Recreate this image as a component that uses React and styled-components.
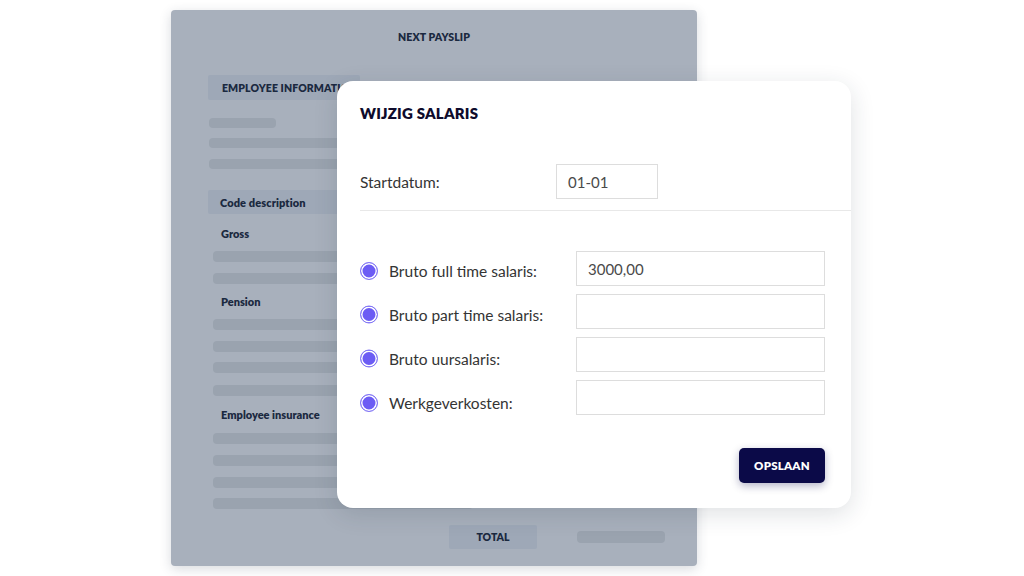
import React from "react";
import styled, { createGlobalStyle } from "styled-components";

const Global = createGlobalStyle`
  html, body { margin: 0; padding: 0; background: #ffffff; }
  body { width: 1024px; height: 576px; overflow: hidden; font-family: Lato, "Noto Sans", sans-serif; }
  * { box-sizing: border-box; }
`;

const Stage = styled.div`
  position: relative;
  width: 1024px;
  height: 576px;
  padding: 10px 0 0 171px;
`;

const Payslip = styled.div`
  width: 526px;
  height: 556px;
  background: #a8b0bc;
  border-radius: 4px;
  box-shadow: 0 3px 12px rgba(40, 50, 70, 0.18);
  padding: 20px 0 0 37px;
  display: flex;
  flex-direction: column;
  color: #1b2940;
`;

const SlipTitle = styled.div`
  font-size: 10.5px;
  font-weight: 800;
  line-height: 14px;
  text-align: center;
  margin-left: -37px;
  letter-spacing: 0.1px;
`;

const Header = styled.div`
  width: ${(p) => p.$w}px;
  height: ${(p) => p.$h || 25}px;
  margin-top: ${(p) => p.$mt}px;
  background: #9ea8b7;
  border-radius: 2px;
  display: flex;
  align-items: center;
  padding-left: ${(p) => p.$pl || 14}px;
  font-size: ${(p) => p.$fs || 10.5}px;
  font-weight: 800;
  letter-spacing: 0.1px;
  white-space: nowrap;
`;

const Bar = styled.div`
  width: ${(p) => p.$w}px;
  height: ${(p) => p.$h || 11}px;
  margin-top: ${(p) => p.$mt}px;
  margin-left: ${(p) => p.$ml || 0}px;
  background: #9aa3af;
  border-radius: 4px;
`;

const SectionLabel = styled.div`
  font-size: 11px;
  font-weight: 800;
  line-height: 14px;
  margin-top: ${(p) => p.$mt}px;
  padding-left: 13px;
`;

const TotalRow = styled.div`
  display: flex;
  align-items: center;
  margin-top: auto;
  margin-bottom: 17px;
  padding-left: 241px;
  gap: 40px;
`;

const TotalBox = styled.div`
  width: 88px;
  height: 24px;
  background: #9ea8b7;
  border-radius: 2px;
  display: flex;
  align-items: center;
  justify-content: center;
  font-size: 10.5px;
  font-weight: 800;
`;

const Modal = styled.div`
  position: absolute;
  left: 337px;
  top: 81px;
  width: 514px;
  height: 427px;
  background: #ffffff;
  border-radius: 16px;
  box-shadow: 0 6px 24px rgba(30, 40, 60, 0.14);
  padding: 23px 26px 25px 23px;
  display: flex;
  flex-direction: column;
`;

const ModalTitle = styled.h2`
  margin: 0;
  font-size: 15px;
  line-height: 18px;
  font-weight: 800;
  color: #0e0b2c;
  letter-spacing: 0.2px;
`;

const DateRow = styled.div`
  display: flex;
  align-items: center;
  margin-top: 42px;
`;

const Label = styled.span`
  font-size: 15.5px;
  color: #343434;
  width: ${(p) => p.$w}px;
  flex-shrink: 0;
`;

const Input = styled.div`
  width: ${(p) => p.$w}px;
  height: ${(p) => p.$h || 35}px;
  border: 1.5px solid #dddddd;
  display: flex;
  align-items: center;
  padding-left: 11px;
  font-size: 15px;
  color: #4a4a4a;
  font-family: Lato, "Noto Sans", sans-serif;
`;

const Divider = styled.hr`
  border: 0;
  border-top: 1.5px solid #e8e8e8;
  margin: 11px -26px 0 0;
`;

const Fields = styled.div`
  display: flex;
  flex-direction: column;
  gap: 8px;
  margin-top: 40px;
`;

const FieldRow = styled.div`
  display: flex;
  align-items: center;
`;

const RadioLabel = styled.div`
  display: flex;
  align-items: center;
  gap: 11px;
  width: 216px;
  flex-shrink: 0;
  transform: translateY(${(p) => p.$dy}px);
`;

const Radio = styled.span`
  width: 18px;
  height: 18px;
  border-radius: 50%;
  border: 1.5px solid #8377f5;
  background: #6c5cf4;
  box-shadow: inset 0 0 0 1.5px #ffffff;
  flex-shrink: 0;
`;

const Footer = styled.div`
  display: flex;
  justify-content: flex-end;
  margin-top: auto;
`;

const Button = styled.button`
  width: 86px;
  height: 35px;
  border: 0;
  border-radius: 5px;
  background: #0b0a48;
  color: #ffffff;
  font-family: Lato, "Noto Sans", sans-serif;
  font-weight: 800;
  font-size: 11.5px;
  letter-spacing: 0.2px;
  box-shadow: 0 3px 8px rgba(11, 10, 72, 0.3);
`;

const fields = [
  { label: "Bruto full time salaris:", value: "3000,00", dy: 2 },
  { label: "Bruto part time salaris:", value: "", dy: 2.5 },
  { label: "Bruto uursalaris:", value: "", dy: 3.5 },
  { label: "Werkgeverkosten:", value: "", dy: 5 },
];

export default function App() {
  return (
    <>
      <Global />
      <Stage>
        <Payslip>
          <SlipTitle>NEXT PAYSLIP</SlipTitle>
          <Header $w={152} $mt={31}>EMPLOYEE INFORMATION</Header>
          <Bar $w={67} $h={10} $mt={18} $ml={1} />
          <Bar $w={220} $h={10} $mt={10} $ml={1} />
          <Bar $w={220} $h={10} $mt={11} $ml={1} />
          <Header $w={300} $h={24} $mt={21} $pl={12} $fs={11}>
            Code description
          </Header>
          <SectionLabel $mt={13}>Gross</SectionLabel>
          <Bar $w={260} $mt={10} $ml={5} />
          <Bar $w={260} $mt={11} $ml={5} />
          <SectionLabel $mt={11}>Pension</SectionLabel>
          <Bar $w={260} $mt={10} $ml={5} />
          <Bar $w={260} $mt={11} $ml={5} />
          <Bar $w={260} $mt={10} $ml={5} />
          <Bar $w={260} $mt={12} $ml={5} />
          <SectionLabel $mt={12}>Employee insurance</SectionLabel>
          <Bar $w={260} $mt={11} $ml={5} />
          <Bar $w={260} $mt={11} $ml={5} />
          <Bar $w={260} $mt={11} $ml={5} />
          <Bar $w={260} $mt={10} $ml={5} />
          <TotalRow>
            <TotalBox>TOTAL</TotalBox>
            <Bar $w={88} $h={12} $mt={0} />
          </TotalRow>
        </Payslip>

        <Modal>
          <ModalTitle>WIJZIG SALARIS</ModalTitle>
          <DateRow>
            <Label $w={196}>Startdatum:</Label>
            <Input $w={102} $h={35}>01-01</Input>
          </DateRow>
          <Divider />
          <Fields>
            {fields.map((f) => (
              <FieldRow key={f.label}>
                <RadioLabel $dy={f.dy}>
                  <Radio />
                  <Label>{f.label}</Label>
                </RadioLabel>
                <Input $w={250}>{f.value}</Input>
              </FieldRow>
            ))}
          </Fields>
          <Footer>
            <Button>OPSLAAN</Button>
          </Footer>
        </Modal>
      </Stage>
    </>
  );
}
